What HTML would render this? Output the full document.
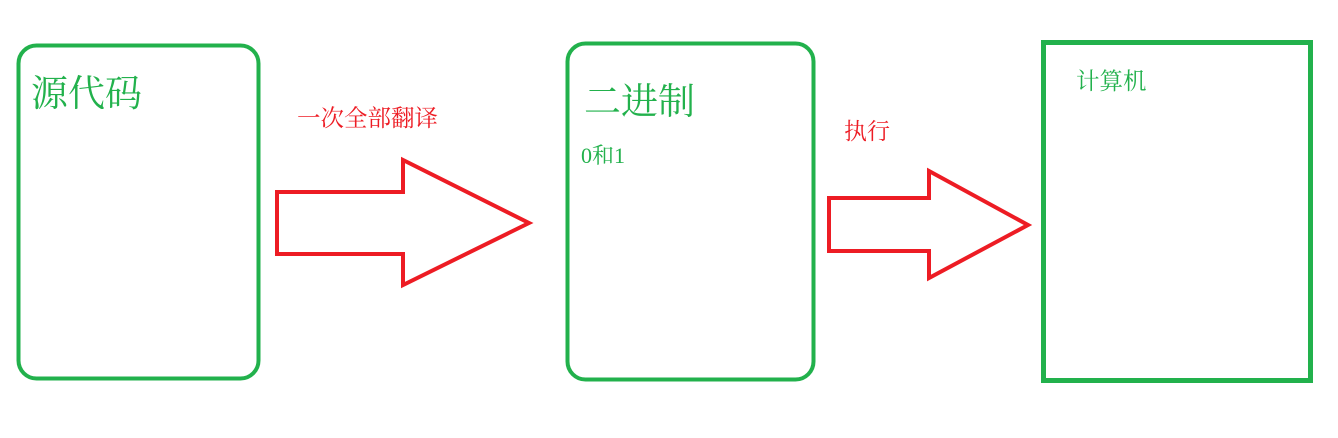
<!DOCTYPE html>
<html><head><meta charset="utf-8"><style>
html,body{margin:0;padding:0;background:#fff;width:1338px;height:438px;overflow:hidden}
svg{display:block}
text{font-family:"Liberation Serif","Noto Serif CJK SC",serif}
</style></head><body>
<svg width="1338" height="438" xmlns="http://www.w3.org/2000/svg">
<rect x="18.5" y="45.5" width="240" height="333" rx="18" fill="none" stroke="#22b14c" stroke-width="4"/>
<rect x="567.5" y="43.5" width="246" height="336" rx="18" fill="none" stroke="#22b14c" stroke-width="4"/>
<rect x="1043.5" y="42.5" width="267" height="338" fill="none" stroke="#22b14c" stroke-width="5"/>
<polygon points="277,192 403,192 403,160 529,223 403,285 403,254 277,254" fill="none" stroke="#ed1c24" stroke-width="4" stroke-linejoin="miter"/>
<polygon points="829,198 929,198 929,171 1028,225 929,278 929,251 829,251" fill="none" stroke="#ed1c24" stroke-width="4"/>
<text x="31" y="106" font-size="37" fill="#22b14c">源代码</text>
<text x="297" y="126" font-size="23.5" fill="#ed1c24">一次全部翻译</text>
<text x="584" y="114" font-size="37" fill="#22b14c">二进制</text>
<text x="581" y="163" font-size="22" fill="#22b14c">0和1</text>
<text x="844" y="139" font-size="23" fill="#ed1c24">执行</text>
<text x="1076" y="89" font-size="23.5" fill="#22b14c">计算机</text>
</svg>
</body></html>
